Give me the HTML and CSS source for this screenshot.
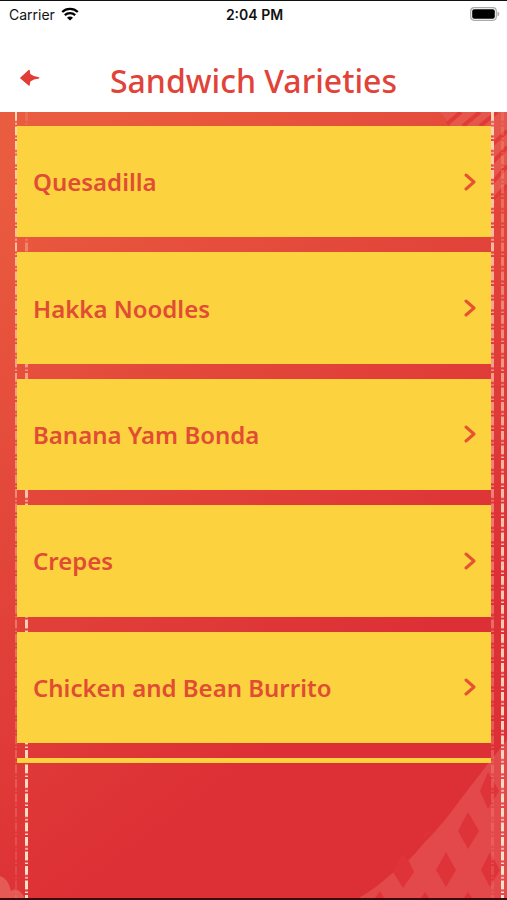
FILE: index.html
```html
<!DOCTYPE html>
<html lang="en">
	<head>
		<meta charset="UTF-8" />
		<meta name="viewport" content="width=device-width, initial-scale=1.0" />
		<title>Sandwich Varieties</title>
		<link rel="stylesheet" href="styles.css">
	</head>
	<body>
		<header class="header">
			<div class="status-bar">
				<div class="carrier">
					<span>Carrier</span>
					<svg class="wifi" viewBox="0 0 18 14" aria-hidden="true">
						<path d="M1.2 5C5.6.8 12.4.8 16.8 5M3.800 8.200c3-2.800 7.400-2.800 10.400 0" fill="none" stroke="#000" stroke-width="2.300"/>
						<path d="M9 13.600 6 10.700c1.700-1.500 4.300-1.500 6 0z"/>
					</svg>
				</div>
				<span class="time">2:04 PM</span>
				<svg class="battery" viewBox="0 0 30 14" aria-hidden="true">
					<rect x="0.700" y="0.700" width="25.600" height="12.600" rx="3.500" fill="#fff" stroke="#aaa" stroke-width="1.200"/>
					<rect x="2.200" y="2.200" width="22.600" height="9.600" rx="2"/>
					<path d="M27.500 4.500c2.400.8 2.400 4.200 0 5z" fill="#aaa"/>
				</svg>
			</div>
			<div class="title-bar">
				<button class="back" type="button" aria-label="Back">
					<svg viewBox="0 0 20 18" aria-hidden="true">
						<path d="M.4 8.400 8.600 1q1-.8 1.200.6l.5 3.400q3 2.600 8.700 3.200.8.800 0 1.200-5.700.6-8.700 3.200l-.5 3.400q-.2 1.300-1.200.5L.4 9.600q-.7-.6 0-1.200z" fill="#e13c35"/>
					</svg>
				</button>
				<h1>Sandwich Varieties</h1>
			</div>
		</header>
		<main class="content">
			<svg class="backdrop" viewBox="0 0 507 786" preserveAspectRatio="none" aria-hidden="true">
				<defs>
					<linearGradient id="red" gradientUnits="userSpaceOnUse" x1="0" y1="60" x2="370" y2="560">
						<stop offset="0" stop-color="#ea5c3f"/>
						<stop offset="0.5" stop-color="#e2453a"/>
						<stop offset="1" stop-color="#dd3036"/>
					</linearGradient>
					<linearGradient id="fade-down" x1="0" y1="0" x2="0" y2="1">
						<stop offset="0" stop-color="#ffe6c8" stop-opacity="0.9"/>
						<stop offset="0.5" stop-color="#ffc8b0" stop-opacity="0.5"/>
						<stop offset="1" stop-color="#ffb0a0" stop-opacity="0.15"/>
					</linearGradient>
					<linearGradient id="fade-up" x1="0" y1="0" x2="0" y2="1">
						<stop offset="0" stop-color="#ffc8b0" stop-opacity="0.15"/>
						<stop offset="0.5" stop-color="#ffe6c8" stop-opacity="0.8"/>
						<stop offset="1" stop-color="#ffecd2" stop-opacity="0.95"/>
					</linearGradient>
					<pattern id="dashes" width="507" height="14.500" patternUnits="userSpaceOnUse">
						<path d="M0 0h507v9H0zM0 11h507v1.500H0z" fill="#fff"/>
					</pattern>
					<mask id="stitch">
						<rect width="507" height="786" fill="url(#dashes)"/>
					</mask>
				</defs>
				<rect width="507" height="786" fill="url(#red)"/>
				<path d="M440 0h67v75l-14 17V20l-40-4z" fill="#e5564d"/>
				<g stroke="#e23a35" stroke-width="4">
					<path d="M447 12l14-12M463 14l17-14M480 14l17-14M493 32l14-13M493 50l14-15M493 70l14-16M493 88l14-15"/>
				</g>
				<!-- patterned paper in the lower corner -->
				<path d="M357 787q18-10 33-24 18-12 34-32 20-20 36-43l27-35 20-25v159z" fill="#e3484b"/>
				<g fill="#de3439">
					<path d="M488 660l11 19-11 18-8-18zM468 700l-10 19 10 18 11-18zM446 740l-10 18 10 17 10-17zM402 743l-9 17 10 16 11-16-5-11zM490 740l-9 18 9 17 10-17zM425 719l-2 10 8-9zM380 779l-5 7h9zM425 780l-4 6h8zM468 780l-4 6h8z"/>
				</g>
				<path d="M0 764q8 2 11 15 7-5 14 7H0z" fill="#e55a55"/>
				<g mask="url(#stitch)">
					<rect x="15" y="0" width="2" height="786" fill="url(#fade-down)"/>
					<rect x="25" y="0" width="3" height="786" fill="url(#fade-up)"/>
					<rect x="491" y="0" width="3" height="786" fill="url(#fade-down)"/>
					<rect x="501" y="0" width="3" height="786" fill="url(#fade-up)"/>
				</g>
			</svg>
			<nav class="varieties" aria-label="Sandwich varieties">
				<a class="card" href="#quesadilla">
					<span>Quesadilla</span>
					<svg class="chevron" viewBox="0 0 12 18" aria-hidden="true"><path d="M2 2l8 7-8 7"/></svg>
				</a>
				<a class="card" href="#hakka-noodles">
					<span>Hakka Noodles</span>
					<svg class="chevron" viewBox="0 0 12 18" aria-hidden="true"><path d="M2 2l8 7-8 7"/></svg>
				</a>
				<a class="card" href="#banana-yam-bonda">
					<span>Banana Yam Bonda</span>
					<svg class="chevron" viewBox="0 0 12 18" aria-hidden="true"><path d="M2 2l8 7-8 7"/></svg>
				</a>
				<a class="card" href="#crepes">
					<span>Crepes</span>
					<svg class="chevron" viewBox="0 0 12 18" aria-hidden="true"><path d="M2 2l8 7-8 7"/></svg>
				</a>
				<a class="card" href="#chicken-and-bean-burrito">
					<span>Chicken and Bean Burrito</span>
					<svg class="chevron" viewBox="0 0 12 18" aria-hidden="true"><path d="M2 2l8 7-8 7"/></svg>
				</a>
			</nav>
			<div class="list-end"></div>
		</main>
	</body>
</html>
```

FILE: styles.css
```css
* {
	box-sizing: border-box;
}
body {
	margin: 0;
	min-height: 100vh;
	display: flex;
	flex-direction: column;
	border-top: 1px solid #111;
	border-bottom: 2px solid #3a0a0c;
	background: #fff;
	font-family: "Trebuchet MS", "Noto Sans", sans-serif;
}
.status-bar {
	display: grid;
	grid-template-columns: 1fr auto 1fr;
	align-items: center;
	height: 26px;
	padding: 0 7px 0 9px;
	color: #111;
	font-family: Inter, sans-serif;
	font-size: 14px;
}
.carrier {
	display: flex;
	align-items: center;
	gap: 6px;
}
.wifi {
	width: 18px;
	height: 14px;
}
.time {
	font-weight: 600;
}
.battery {
	width: 30px;
	height: 14px;
	justify-self: end;
}
.title-bar {
	display: grid;
	grid-template-columns: 40px 1fr 40px;
	align-items: center;
	height: 85px;
	padding: 22px 20px 0;
}
.back {
	display: flex;
	padding: 0 0 6px;
	border: 0;
	background: none;
}
.back svg {
	width: 20px;
	height: 18px;
}
h1 {
	margin: 0;
	color: #e14338;
	font-size: 32px;
	font-weight: 500;
	line-height: 40px;
	text-align: center;
	white-space: nowrap;
}
.content {
	position: relative;
	flex: 1;
	padding: 14px 16px 0 17px;
}
.backdrop {
	position: absolute;
	inset: 0;
	z-index: -1;
	width: 100%;
	height: 100%;
}
.varieties {
	display: grid;
	grid-auto-rows: 1fr;
	gap: 15px;
	min-height: calc(100vh - 283px);
}
.card {
	display: flex;
	align-items: center;
	justify-content: space-between;
	padding: 0 15px 0 16px;
	background: #fcd33e;
	color: #e14c35;
	font-size: 24px;
	font-weight: 600;
	text-decoration: none;
}
.chevron {
	width: 12px;
	height: 18px;
	fill: none;
	stroke: #e55330;
	stroke-width: 3;
	stroke-linecap: round;
	stroke-linejoin: round;
}
.list-end {
	height: 5px;
	margin-top: 15px;
	background: #fcd33e;
}
```
